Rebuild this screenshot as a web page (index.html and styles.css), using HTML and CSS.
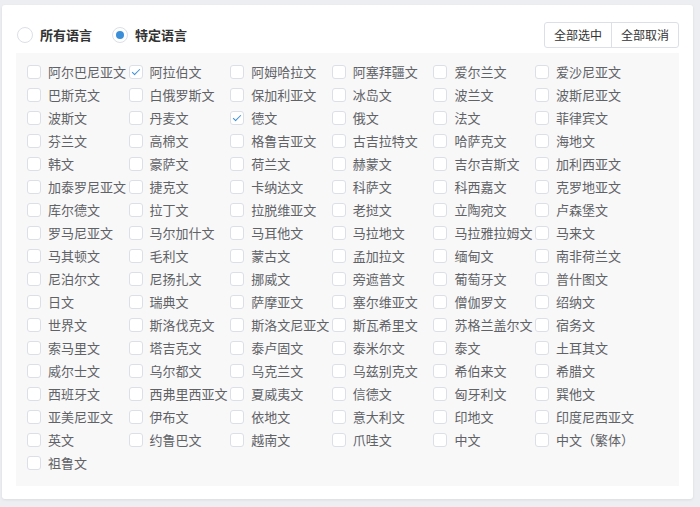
FILE: index.html
```html
<!DOCTYPE html>
<html lang="zh-CN">

<head>
    <meta charset="UTF-8">
    <title>语言选择</title>
    <link rel="stylesheet" href="styles.css">
</head>

<body>
    <div class="card">
        <div class="head">
            <div class="radios">
                <label class="radio"><span class="dot"></span>所有语言</label>
                <label class="radio on"><span class="dot"></span>特定语言</label>
            </div>
            <div class="btnGroup">
                <div class="btn">全部选中</div>
                <div class="btn">全部取消</div>
            </div>
        </div>
        <div class="langPanel" id="langPanel"></div>
    </div>

    <script>
        var langs = ['阿尔巴尼亚文', '阿拉伯文', '阿姆哈拉文', '阿塞拜疆文', '爱尔兰文', '爱沙尼亚文',
            '巴斯克文', '白俄罗斯文', '保加利亚文', '冰岛文', '波兰文', '波斯尼亚文',
            '波斯文', '丹麦文', '德文', '俄文', '法文', '菲律宾文',
            '芬兰文', '高棉文', '格鲁吉亚文', '古吉拉特文', '哈萨克文', '海地文',
            '韩文', '豪萨文', '荷兰文', '赫蒙文', '吉尔吉斯文', '加利西亚文',
            '加泰罗尼亚文', '捷克文', '卡纳达文', '科萨文', '科西嘉文', '克罗地亚文',
            '库尔德文', '拉丁文', '拉脱维亚文', '老挝文', '立陶宛文', '卢森堡文',
            '罗马尼亚文', '马尔加什文', '马耳他文', '马拉地文', '马拉雅拉姆文', '马来文',
            '马其顿文', '毛利文', '蒙古文', '孟加拉文', '缅甸文', '南非荷兰文',
            '尼泊尔文', '尼扬扎文', '挪威文', '旁遮普文', '葡萄牙文', '普什图文',
            '日文', '瑞典文', '萨摩亚文', '塞尔维亚文', '僧伽罗文', '绍纳文',
            '世界文', '斯洛伐克文', '斯洛文尼亚文', '斯瓦希里文', '苏格兰盖尔文', '宿务文',
            '索马里文', '塔吉克文', '泰卢固文', '泰米尔文', '泰文', '土耳其文',
            '威尔士文', '乌尔都文', '乌克兰文', '乌兹别克文', '希伯来文', '希腊文',
            '西班牙文', '西弗里西亚文', '夏威夷文', '信德文', '匈牙利文', '巽他文',
            '亚美尼亚文', '伊布文', '依地文', '意大利文', '印地文', '印度尼西亚文',
            '英文', '约鲁巴文', '越南文', '爪哇文', '中文', '中文（繁体）',
            '祖鲁文'];
        var checked = ['阿拉伯文', '德文'];

        var panel = document.getElementById('langPanel');
        langs.forEach(function (name) {
            var item = document.createElement('label');
            item.className = 'lang';
            var box = document.createElement('span');
            box.className = checked.indexOf(name) >= 0 ? 'box checked' : 'box';
            item.appendChild(box);
            item.appendChild(document.createTextNode(name));
            panel.appendChild(item);
        });
    </script>
</body>

</html>
```

FILE: styles.css
```css
html,
body {
    margin: 0;
    background-color: #eceef1;
}

body {
    padding: 5px 7px 7px 2px;
    font-family: "Noto Sans CJK SC", "Microsoft YaHei", sans-serif;
    font-size: 13px;
    color: #606266;
}

.card {
    background-color: #fff;
    border-radius: 3px;
    box-shadow: 0 1px 3px rgba(0, 0, 0, 0.08);
    padding: 17px 14px 13px 14px;
}

.head {
    display: flex;
    justify-content: space-between;
    align-items: center;
    height: 26px;
    margin-bottom: 5px;
}

.radios {
    display: flex;
    gap: 20px;
    padding-left: 1px;
}

.radio {
    display: flex;
    align-items: center;
    gap: 7px;
    font-weight: bold;
    color: #333;
    line-height: 16px;
}

.dot {
    width: 14px;
    height: 14px;
    border: 1px solid #dcdfe6;
    border-radius: 50%;
    position: relative;
    background-color: #fff;
}

.radio.on .dot::after {
    content: '';
    position: absolute;
    left: 3px;
    top: 3px;
    width: 8px;
    height: 8px;
    border-radius: 50%;
    background-color: #3b8fd9;
}

.btnGroup {
    display: flex;
    border: 1px solid #dcdfe6;
    border-radius: 3px;
    height: 24px;
}

.btn {
    padding: 0 9px;
    font-size: 12px;
    line-height: 24px;
    color: #333;
    cursor: pointer;
}

.btn + .btn {
    border-left: 1px solid #dcdfe6;
}

.langPanel {
    background-color: #f8f8f9;
    padding: 7px 0 12px 11px;
    display: grid;
    grid-template-columns: repeat(6, 101.6px);
    grid-auto-rows: 23px;
}

.lang {
    display: flex;
    align-items: center;
    white-space: nowrap;
    cursor: pointer;
}

.box {
    flex: none;
    width: 12px;
    height: 12px;
    border: 1px solid #dcdfe6;
    border-radius: 3px;
    background-color: #fff;
    margin-right: 7px;
    position: relative;
}

.box.checked::after {
    content: '';
    position: absolute;
    left: 4px;
    top: 1px;
    width: 3px;
    height: 7px;
    border: solid #3b8fd9;
    border-width: 0 1.5px 1.5px 0;
    transform: rotate(45deg);
}
```
